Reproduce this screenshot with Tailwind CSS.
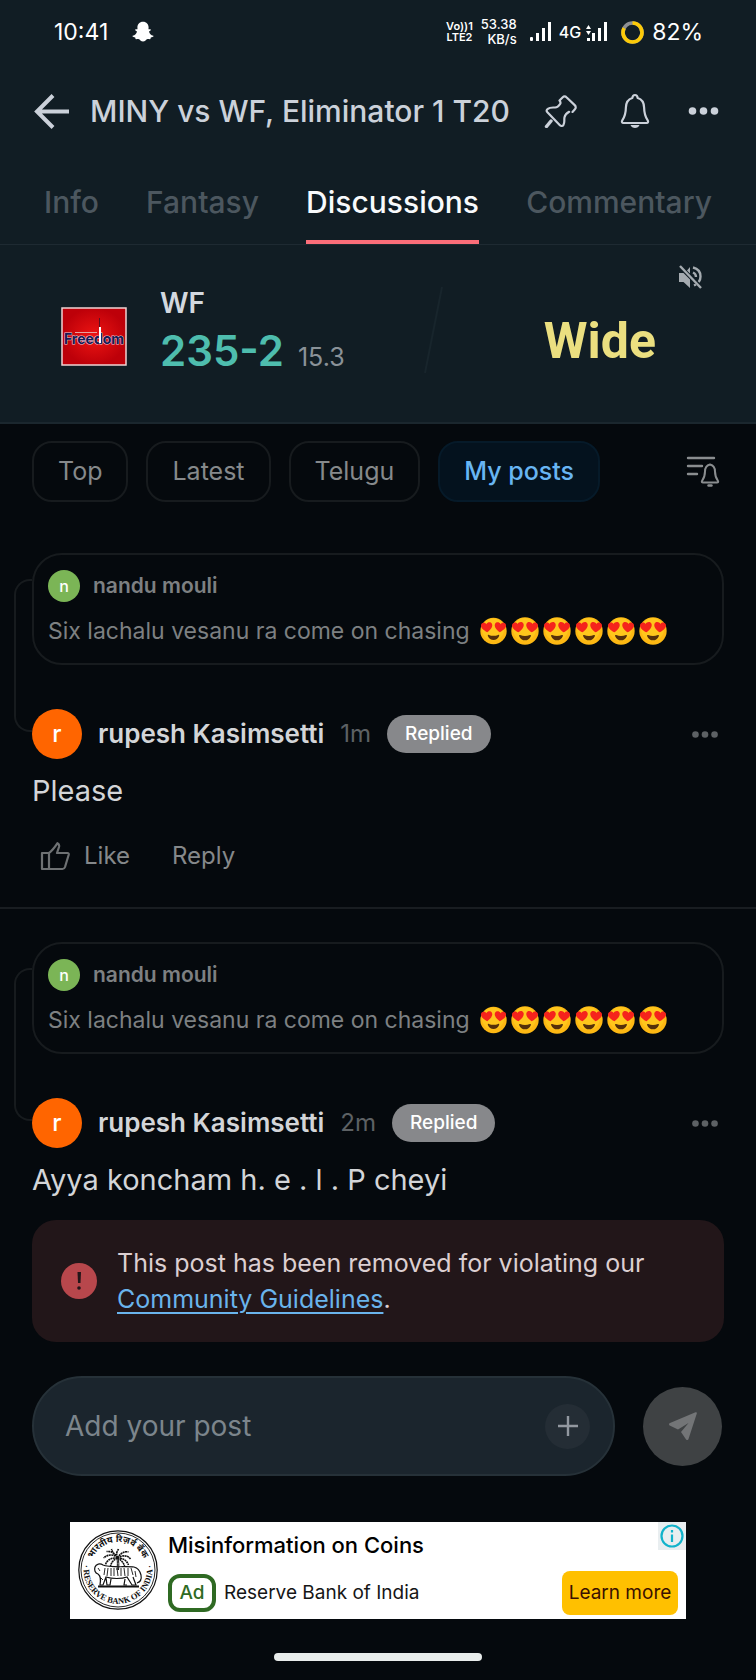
<!DOCTYPE html>
<html lang="en">
<head>
<meta charset="utf-8" />
<title>MINY vs WF, Eliminator 1 T20</title>
<meta name="viewport" content="width=device-width, initial-scale=1" />
<script src="https://cdn.jsdelivr.net/npm/@tailwindcss/browser@4"></script>
</head>
<body class="min-h-screen flex flex-col bg-[#05090d] text-[#d3d5d8] font-[Inter,'Noto_Sans',sans-serif]">

<!-- shared symbols -->
<svg class="hidden">
  <symbol id="heart-eyes" viewBox="0 0 27 27">
    <circle cx="13.5" cy="13.5" r="13.2" fill="#fdb813" />
    <circle cx="13" cy="12" r="11" fill="#ffc61c" />
    <path d="M7.2 14.8C3.5 12.8.6 10.4 1 7.6c.4-2.6 3.900-3.300 5.300-.9 1.300-2.300 4.900-2.600 5.800 0 .9 2.800-1.900 5.800-4.900 8.100z" fill="#f5231c" />
    <path d="M19.800 14.800c3.700-2 6.600-4.400 6.200-7.200-.4-2.600-3.900-3.300-5.300-.9-1.300-2.300-4.900-2.600-5.800 0-.9 2.800 1.900 5.800 4.900 8.100z" fill="#f5231c" />
    <path d="M8.800 17.400c3 1.200 6.400 1.200 9.400 0 .8-.2 1.200.3.900 1.100-1 2.600-3 4-5.600 4s-4.600-1.400-5.600-4c-.3-.8.1-1.300.9-1.100z" fill="#55300a" />
  </symbol>
  <symbol id="dots" viewBox="0 0 30 8">
    <circle cx="4" cy="4" r="3.800" /><circle cx="15" cy="4" r="3.800" /><circle cx="26" cy="4" r="3.800" />
  </symbol>
</svg>

<header class="bg-[#111d24]">
  <!-- status bar -->
  <div class="flex items-center justify-between h-16 pl-[54px] pr-[53px] text-white">
    <div class="flex items-center gap-6">
      <span class="text-[23px]">10:41</span>
      <svg class="w-[22px] h-[22px]" viewBox="0 0 22 22" fill="#fff">
        <path d="M11 .8c3.500 0 5.600 2.500 5.600 5.500 0 .8-.1 1.500-.1 2 .6.300 1.500-.5 2.200.1.700.800-.6 1.500-1.700 2 .5 2 1.900 3.700 4.300 4.400.7.300.3 1.200-2.500 1.800-.3.500-.1 1.500-.8 1.600-.9.100-1.800-.4-3 .1-1.200.6-2 2.300-4 2.300s-2.800-1.700-4-2.300c-1.200-.5-2.100 0-3-.1-.7-.1-.5-1.100-.8-1.600-2.800-.6-3.200-1.500-2.500-1.800 2.400-.7 3.800-2.400 4.300-4.400-1.100-.5-2.400-1.200-1.700-2 .7-.6 1.600.2 2.200-.1 0-.5-.1-1.200-.1-2C5.400 3.300 7.500.8 11 .8z" />
      </svg>
    </div>
    <div class="flex items-center">
      <div class="text-[11px] leading-[11px] font-semibold text-center">Vo))1<br />LTE2</div>
      <div class="ml-2 text-[13px] leading-[15px] font-medium text-right">53.38<br />KB/s</div>
      <svg class="ml-3 w-6 h-5" viewBox="0 0 24 20" fill="#fff">
        <rect x="1" y="15" width="3" height="4" rx="1" /><rect x="7" y="11" width="3" height="8" /><rect x="13" y="6" width="3" height="13" /><rect x="19" y="0" width="3" height="19" />
      </svg>
      <span class="ml-1.5 text-base font-medium">4G</span>
      <svg class="ml-1 w-6 h-5" viewBox="0 0 24 20" fill="#fff">
        <path d="M3.500 3l2.500 4H1zM3.500 13L6 9H1z" /><rect x="2" y="16" width="3" height="3" /><rect x="7" y="11" width="3" height="8" /><rect x="13" y="6" width="3" height="13" /><rect x="19" y="0" width="3" height="19" />
      </svg>
      <svg class="ml-3 w-[23px] h-[23px]" viewBox="0 0 23 23" fill="none" stroke-width="3.600">
        <circle cx="11.500" cy="11.500" r="9.500" stroke="#8d8f93" />
        <circle cx="11.500" cy="11.500" r="9.500" stroke="#fcca08" stroke-dasharray="49 60" transform="rotate(-90 11.500 11.500)" />
      </svg>
      <span class="ml-2 text-[23px]">82%</span>
    </div>
  </div>

  <!-- title bar -->
  <div class="flex items-center h-[92px] pl-[34px] pr-[37px] pt-0.5 text-[#cbd1da]">
    <button aria-label="Back">
      <svg class="w-9 h-9" viewBox="0 0 36 36" fill="none" stroke="currentColor" stroke-width="4"><path d="M19 2.500L3 18.500l16 16M3 18.500h32" /></svg>
    </button>
    <h1 class="ml-5 text-[30px] font-medium whitespace-nowrap">MINY vs WF, Eliminator 1 T20</h1>
    <div class="flex items-center ml-auto">
      <button aria-label="Pin">
        <svg class="w-[34px] h-[34px]" viewBox="0 0 34 34" fill="none" stroke="currentColor" stroke-width="2.200" stroke-linecap="round" stroke-linejoin="round">
          <path d="M15.500 6.500l3-3c1.200-1.200 3-1.200 4.200 0l8 7.600c1.300 1.200 1.400 3 .2 4.200l-2.400 2.600M15.500 6.500c1 1.200 1.300 2.400.6 3.500-1 1.500-3 3.400-5 3.500-2.800.1-5.200-.4-7.300 1.400-1.500 1.200-1.500 2.300-.4 3.400l12.500 12.900c1.200 1.200 2.700 1 3.600-.4 1.500-2.500.4-4.800 1-7.500.5-2.300 2.500-4.300 4.600-5.500" />
          <path d="M7 27l-4.500 5.500" stroke-width="3.400" />
        </svg>
      </button>
      <button aria-label="Alerts" class="ml-10">
        <svg class="w-[34px] h-9" viewBox="0 0 34 36" fill="none" stroke="currentColor" stroke-width="2.200" stroke-linejoin="round">
          <path d="M17 2c1.500 0 2.500 1.500 2.700 3 4.500 1.300 6.300 5.200 6.400 9.500.1 5.500.5 8.500 3.600 12.800.8 1.400.4 2.700-1.200 2.700h-23c-1.600 0-2-1.300-1.200-2.700 3.100-4.300 3.500-7.300 3.600-12.800.1-4.300 1.900-8.200 6.400-9.500C14.500 3.500 15.500 2 17 2z" />
          <path d="M12.500 32h9c-.7 2-2.500 3-4.500 3s-3.800-1-4.500-3z" fill="currentColor" stroke="none" />
        </svg>
      </button>
      <button aria-label="More" class="ml-9"><svg class="w-[31px] h-2" fill="currentColor"><use href="#dots" /></svg></button>
    </div>
  </div>

  <nav class="flex justify-between h-[89px] px-11 border-b border-[#1e2a32] text-[30px] font-medium text-[#4c575f]">
    <a href="#" class="flex items-center pt-1">Info</a>
    <a href="#" class="flex items-center pt-1">Fantasy</a>
    <a href="#" class="flex items-center pt-2 border-b-4 border-[#fb6e79] text-[#f8fafc]">Discussions</a>
    <a href="#" class="flex items-center pt-1">Commentary</a>
  </nav>

  <!-- live score -->
  <section class="flex h-[179px] pl-[61px] pr-[54px] border-b-2 border-[#1b272e]">
    <svg class="mt-[62px] w-[66px] h-[59px]" viewBox="0 0 66 59">
      <defs><radialGradient id="red"><stop offset="0" stop-color="#ee1513" /><stop offset="1" stop-color="#bd0009" /></radialGradient></defs>
      <rect x="1" y="1" width="64" height="57" fill="url(#red)" stroke="#f0d3d3" stroke-width="1.500" />
      <path d="M38.500 11v10" stroke="#5c1020" />
      <path d="M14 25.500h22" stroke="#e8a0a0" />
      <text x="33" y="36.500" text-anchor="middle" font-family="Inter" font-size="14" font-weight="700" fill="#151a55" stroke="#e8c8d8" stroke-width="1" paint-order="stroke">Freedom</text>
      <path d="M38 20h2v16h-2z" fill="#fff" />
    </svg>
    <div class="ml-[33px] pt-10">
      <div class="text-[28px] leading-9 font-semibold text-[#d3d8df]">WF</div>
      <div class="flex items-baseline gap-3.5">
        <span class="text-[42px] leading-[60px] font-semibold text-[#4ebdae]">235-2</span>
        <span class="text-[25px] text-[#8a9298]">15.3</span>
      </div>
    </div>
    <svg class="ml-auto mt-10 w-5 h-[90px]" viewBox="0 0 20 90"><path d="M18 2L1 88" stroke="#18252c" stroke-width="2" /></svg>
    <div class="flex flex-col items-end ml-[100px] pt-5">
      <button aria-label="Unmute">
        <svg class="w-6 h-6" viewBox="0 0 24 24" fill="#a5abb0">
          <path d="M1 8h4.500l6.500 6.500V23l-6.500-6H1zM12 2v6.500L9 5.500z" />
          <path d="M2 1l21 22" stroke="#a5abb0" stroke-width="2.400" />
          <path d="M15 2.500c4.800 1.200 7.500 4.500 7.500 9 0 2.200-.6 4-1.800 5.500M15 7.500c1.800.8 3 2.200 3 4.500M16 20.500l2-1" fill="none" stroke="#a5abb0" stroke-width="2.400" />
        </svg>
      </button>
      <div class="mt-[22px] mr-[46px] font-[Roboto] text-[50px] leading-[60px] font-bold text-[#ebdf80]">Wide</div>
    </div>
  </section>
</header>

<main class="px-8">
  <div class="flex items-center gap-[18px] pt-[17px] pb-[18px] text-[25px] text-[#86898b]">
    <button class="h-[61px] px-6 rounded-[20px] border-2 border-[#171b1e]">Top</button>
    <button class="h-[61px] px-6 rounded-[20px] border-2 border-[#171b1e]">Latest</button>
    <button class="h-[61px] px-6 rounded-[20px] border-2 border-[#171b1e]">Telugu</button>
    <button class="h-[61px] px-6 rounded-[20px] border-2 border-[#061a29] bg-[#04121e] font-medium text-[#68b5f3]">My posts</button>
    <button aria-label="Notification filter" class="ml-auto mr-1">
      <svg class="w-[34px] h-8" viewBox="0 0 34 32" fill="none" stroke="#8a8d8f" stroke-width="2.400" stroke-linecap="round" stroke-linejoin="round">
        <path d="M2 2h26M2 10h14M2 18h9" />
        <path d="M24 8.500c3.500 1 5 3.500 5 7 0 4 .5 6 3 9.500.5.900 0 1.500-1 1.500H17c-1 0-1.500-.6-1-1.500 2.500-3.500 3-5.500 3-9.500 0-3.500 1.500-6 5-7z" stroke-width="2" />
        <path d="M22.500 29.500h3" />
      </svg>
    </button>
  </div>

  <article class="-mx-8 px-8 pb-[35px] border-b-2 border-[#191d21]">
    <div class="relative pt-[33px]">
      <div class="absolute -left-[18px] top-[59px] w-[18px] h-[153px] rounded-l-2xl border-2 border-r-0 border-[#171b1e]"></div>
      <blockquote class="relative rounded-[30px] border-2 border-[#171b1e] bg-[#05090d] px-3.5 pt-[15px] pb-3">
        <div class="flex items-center gap-[13px] text-[21px] font-semibold text-[#7d8082]">
          <span class="flex items-center justify-center w-8 h-8 rounded-full bg-[#7bb556] text-base font-medium text-white">n</span>nandu mouli
        </div>
        <p class="flex items-center mt-[9px] text-[23px] leading-10 text-[#7d8082]">Six lachalu vesanu ra come on chasing
          <span class="flex gap-1 ml-2.5">
            <svg class="w-[27px] h-7"><use href="#heart-eyes" /></svg><svg class="w-7 h-7"><use href="#heart-eyes" /></svg><svg class="w-7 h-7"><use href="#heart-eyes" /></svg><svg class="w-7 h-7"><use href="#heart-eyes" /></svg><svg class="w-7 h-7"><use href="#heart-eyes" /></svg><svg class="w-7 h-7"><use href="#heart-eyes" /></svg>
          </span>
        </p>
      </blockquote>
      <div class="relative flex items-center mt-11">
        <span class="flex items-center justify-center w-[50px] h-[50px] rounded-full bg-[#ff6500] text-2xl font-medium text-white">r</span>
        <span class="ml-4 text-[26px] leading-9 font-semibold text-[#d3d5d8]">rupesh Kasimsetti</span>
        <span class="ml-4 text-[24px] text-[#5d6164]">1m</span>
        <span class="ml-4 flex items-center h-[38px] px-[18px] rounded-full bg-[#87888b] text-[19px] font-medium text-white">Replied</span>
        <button aria-label="Post menu" class="ml-auto mr-1.5"><svg class="w-[26px] h-[7px]" fill="#5d6164"><use href="#dots" /></svg></button>
      </div>
    </div>
    <p class="mt-3 text-[29px] leading-10">Please</p>
    <div class="flex items-center mt-[29px] pl-2 text-[24px] leading-8 text-[#85888a]">
      <button class="flex items-center gap-3.5">
        <svg class="w-[30px] h-[30px]" viewBox="0 0 30 30" fill="none" stroke="#6e7173" stroke-width="2.200" stroke-linejoin="round">
          <path d="M2 12h7v16H2zM9 12c3-2 6-6 8.500-9.800 1.500.8 2 2 1.500 3.800l-2 6h10.500c1 0 1.400.8 1.200 1.700L25 26c-.5 1.400-1.200 2-2.500 2H9" />
        </svg>Like
      </button>
      <button class="ml-[42px]">Reply</button>
    </div>
  </article>

  <article>
    <div class="relative pt-[33px]">
      <div class="absolute -left-[18px] top-[59px] w-[18px] h-[153px] rounded-l-2xl border-2 border-r-0 border-[#171b1e]"></div>
      <blockquote class="relative rounded-[30px] border-2 border-[#171b1e] bg-[#05090d] px-3.5 pt-[15px] pb-3">
        <div class="flex items-center gap-[13px] text-[21px] font-semibold text-[#7d8082]">
          <span class="flex items-center justify-center w-8 h-8 rounded-full bg-[#7bb556] text-base font-medium text-white">n</span>nandu mouli
        </div>
        <p class="flex items-center mt-[9px] text-[23px] leading-10 text-[#7d8082]">Six lachalu vesanu ra come on chasing
          <span class="flex gap-1 ml-2.5">
            <svg class="w-[27px] h-7"><use href="#heart-eyes" /></svg><svg class="w-7 h-7"><use href="#heart-eyes" /></svg><svg class="w-7 h-7"><use href="#heart-eyes" /></svg><svg class="w-7 h-7"><use href="#heart-eyes" /></svg><svg class="w-7 h-7"><use href="#heart-eyes" /></svg><svg class="w-7 h-7"><use href="#heart-eyes" /></svg>
          </span>
        </p>
      </blockquote>
      <div class="relative flex items-center mt-11">
        <span class="flex items-center justify-center w-[50px] h-[50px] rounded-full bg-[#ff6500] text-2xl font-medium text-white">r</span>
        <span class="ml-4 text-[26px] leading-9 font-semibold text-[#d3d5d8]">rupesh Kasimsetti</span>
        <span class="ml-4 text-[24px] text-[#5d6164]">2m</span>
        <span class="ml-4 flex items-center h-[38px] px-[18px] rounded-full bg-[#87888b] text-[19px] font-medium text-white">Replied</span>
        <button aria-label="Post menu" class="ml-auto mr-1.5"><svg class="w-[26px] h-[7px]" fill="#5d6164"><use href="#dots" /></svg></button>
      </div>
    </div>
    <p class="mt-3 text-[29px] leading-10">Ayya koncham h. e . l . P cheyi</p>
    <div class="flex items-center gap-5 mt-5 py-[25px] px-[29px] rounded-3xl bg-[#221619] text-[25px] leading-9 text-[#dccfd1]">
      <svg class="shrink-0 w-9 h-9" viewBox="0 0 36 36"><circle cx="18" cy="18" r="18" fill="#b8474c" /><path d="M16.500 9h3.500l-.5 11h-2.500z" fill="#221619" /><circle cx="18" cy="25" r="1.800" fill="#221619" /></svg>
      <p>This post has been removed for violating our <a href="#" class="text-[#6ab4ec] underline decoration-2 underline-offset-4">Community Guidelines</a>.</p>
    </div>
  </article>

  <form class="flex items-center gap-7 mt-[34px] pr-0.5">
    <div class="flex items-center flex-1 h-[100px] pl-[31px] pr-[23px] rounded-full border-2 border-[#263138] bg-[#1b252d]">
      <input type="text" aria-label="Add your post" placeholder="Add your post" class="flex-1 min-w-0 text-[28px] bg-transparent outline-none placeholder:text-[#7c858c]" />
      <button type="button" aria-label="Attach" class="flex items-center justify-center w-[45px] h-[45px] rounded-full bg-[#242d35]">
        <svg class="w-5 h-5" viewBox="0 0 20 20" stroke="#9298a0" stroke-width="2.400"><path d="M10 0v20M0 10h20" /></svg>
      </button>
    </div>
    <button type="submit" aria-label="Send" class="flex items-center justify-center w-[79px] h-[79px] rounded-full bg-[#3f4244]">
      <svg class="w-7 h-7" viewBox="0 0 28 28" fill="#737577"><path d="M26.500.2c.9-.3 1.600.4 1.300 1.400L19.500 27c-.5 1.300-1.800 1.400-2.600.3L12 20l7.500-9L9 17.500.7 13.500c-1-.7-.9-2 .3-2.500z" /></svg>
    </button>
  </form>
</main>

<!-- banner ad -->
<aside class="relative flex mt-[46px] mx-[70px] h-[97px] pl-2 pr-2 bg-white text-[#161616]">
  <svg class="shrink-0 mt-2 w-20 h-20" viewBox="0 0 80 80" fill="none" stroke="#111">
    <defs>
      <path id="arc-top" d="M12 40a28 28 0 0 1 56 0" />
      <path id="arc-bottom" d="M6.500 31a34.500 34.500 0 1 0 67 0" />
    </defs>
    <circle cx="40" cy="40" r="39.200" stroke-width="1.200" /><circle cx="40" cy="40" r="37" stroke-width=".9" />
    <g fill="#111" stroke="none" font-weight="700">
      <text font-family="'Noto Sans Devanagari','Noto Sans',sans-serif" font-size="9" text-anchor="middle"><textPath href="#arc-top" startOffset="50%">भारतीय रिज़र्व बैंक</textPath></text>
      <text font-family="Liberation Serif,serif" font-size="8.500" text-anchor="middle"><textPath href="#arc-bottom" startOffset="50%">· RESERVE BANK OF INDIA ·</textPath></text>
    </g>
    <!-- palm -->
    <path d="M39 40c.5-5 .5-8 0-12M40.500 40c.5-5 .5-8-.5-12" stroke-width="1" />
    <path d="M39.500 28c-4-4-9-4-14 0M39.500 28c-6-.5-11 2-12 7M39.500 28c-3-5-6-7-11-6.500M39.500 28c-2-5 0-7 1-9M39.500 28c3-5 7-7 11-6M39.500 28c5-3 10-3 13 1M39.500 28c5 0 9 2 11 7M39.500 28c-4 2-6 4-7 8M39.500 28c3 2 6 4 7 8M39.500 28c-4-4-5-6-6-9" stroke-width="1.600" stroke-dasharray="2 .5" />
    <!-- tiger -->
    <path d="M17 37c1-3 5-4 8-2 6 3 24 1 31 2 4 1 6 4 7 8 .8 4-1 7-4 8M17 37c-1 3 0 6 3 7 3 2 3 5 2 11h3l3-8c6 2 16 2 21 0l5 8h4l-3-8M28 48l1 7h3l1-6M47 49l-1 6h3" stroke-width="1.200" />
    <path d="M27 38l-1 7M30 38l-1 8M33 38v8M36 38v8M39 38l1 8M43 38v8M46 38l1 8M50 38v8M53 38l2 7M20 38l2 3M57 41l1 6M23 48l2 2" stroke-width=".9" />
    <path d="M20 56.500h41" stroke-width="2" />
  </svg>
  <div class="flex flex-col ml-2.5 pt-[7px]">
    <h2 class="text-[22px] leading-8 font-medium whitespace-nowrap text-black">Misinformation on Coins</h2>
    <div class="flex items-center gap-2 mt-[13px]">
      <span class="flex items-center justify-center w-12 h-[38px] rounded-xl border-4 border-[#2f6a23] text-[19px] font-medium text-[#2f6a23]">Ad</span>
      <span class="text-[19px] whitespace-nowrap">Reserve Bank of India</span>
    </div>
  </div>
  <button class="self-end mb-1 ml-auto w-[116px] h-11 rounded-lg bg-[#ffc000] text-[19px] whitespace-nowrap text-[#3a1000]">Learn more</button>
  <a href="#" aria-label="Ad info" class="absolute top-0 right-0 flex items-center justify-center w-7 h-7 bg-[#e9eef0]">
    <svg class="w-6 h-6" viewBox="0 0 24 24" fill="none" stroke="#12b3cb" stroke-width="2.200"><circle cx="12" cy="12" r="10.500" /><path d="M12 10.500V18M12 6v2.500" /></svg>
  </a>
</aside>

<div class="mx-auto mt-[34px] mb-[18px] w-52 h-2 rounded-full bg-[#e8eceb]"></div>

</body>
</html>
